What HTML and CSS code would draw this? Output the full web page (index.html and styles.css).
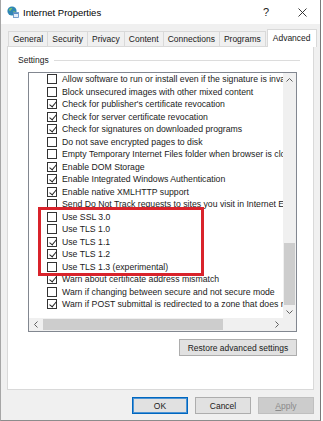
FILE: index.html
```html
<!doctype html>
<html lang="en">
<head>
    <meta charset="utf-8">
    <title>Internet Properties</title>
    <meta name="viewport" content="width=device-width, initial-scale=1.0">
    <link rel="stylesheet" href="styles.css">
</head>
<body>
    <div class="window">
        <div class="titlebar">
            <svg class="app-icon" viewBox="0 0 12 12">
                <circle cx="5" cy="5" r="4.6" fill="#2f86b5"/>
                <path d="M2 3.2 C3 2 4.5 1.6 5.4 2.4 C4.6 3.4 3.4 3.6 3.6 5 C2.6 5.2 2 4.4 2 3.2 Z" fill="#7cc36a"/>
                <path d="M6 5.6 C7 5 8.4 5.4 8.8 6.4 C8 7.6 6.8 8.2 6 7.6 Z" fill="#7cc36a"/>
                <rect x="6.5" y="6.5" width="5" height="5" fill="#e4eef8" stroke="#5a8cc4" stroke-width="0.8"/>
                <rect x="6.9" y="6.9" width="4.2" height="1.1" fill="#5a8cc4"/>
            </svg>
            <span class="title">Internet Properties</span>
            <span class="help">?</span>
            <svg class="close" viewBox="0 0 9 9">
                <path d="M0.5 0.5 L8.5 8.5 M8.5 0.5 L0.5 8.5" stroke="#222" stroke-width="0.9" fill="none"/>
            </svg>
        </div>
        <div class="client">
            <div class="tabs">
                <div class="tab">General</div>
                <div class="tab">Security</div>
                <div class="tab">Privacy</div>
                <div class="tab">Content</div>
                <div class="tab">Connections</div>
                <div class="tab">Programs</div>
                <div class="tab active">Advanced</div>
            </div>
            <div class="panel">
                <div class="group-head">
                    <span>Settings</span>
                    <div class="rule"></div>
                </div>
                <div class="listbox">
                    <div class="rows">
                        <div class="row"><span class="cb"></span>Allow software to run or install even if the signature is invalid</div>
                        <div class="row"><span class="cb"></span>Block unsecured images with other mixed content</div>
                        <div class="row"><span class="cb on"></span>Check for publisher's certificate revocation</div>
                        <div class="row"><span class="cb on"></span>Check for server certificate revocation</div>
                        <div class="row"><span class="cb on"></span>Check for signatures on downloaded programs</div>
                        <div class="row"><span class="cb"></span>Do not save encrypted pages to disk</div>
                        <div class="row"><span class="cb"></span>Empty Temporary Internet Files folder when browser is closed</div>
                        <div class="row"><span class="cb on"></span>Enable DOM Storage</div>
                        <div class="row"><span class="cb on"></span>Enable Integrated Windows Authentication</div>
                        <div class="row"><span class="cb on"></span>Enable native XMLHTTP support</div>
                        <div class="row"><span class="cb"></span>Send Do Not Track requests to sites you visit in Internet Explorer</div>
                        <div class="row"><span class="cb"></span>Use SSL 3.0</div>
                        <div class="row"><span class="cb"></span>Use TLS 1.0</div>
                        <div class="row"><span class="cb on"></span>Use TLS 1.1</div>
                        <div class="row"><span class="cb on"></span>Use TLS 1.2</div>
                        <div class="row"><span class="cb"></span>Use TLS 1.3 (experimental)</div>
                        <div class="row"><span class="cb on"></span>Warn about certificate address mismatch</div>
                        <div class="row"><span class="cb"></span>Warn if changing between secure and not secure mode</div>
                        <div class="row"><span class="cb on"></span>Warn if POST submittal is redirected to a zone that does not permit posting</div>
                    </div>
                    <div class="vscroll">
                        <div class="arrow">
                            <svg viewBox="0 0 7 4"><path d="M0.5 3.5 L3.5 0.5 L6.5 3.5" stroke="#606060" fill="none"/></svg>
                        </div>
                        <div class="vtrack"><div class="vthumb"></div></div>
                        <div class="arrow">
                            <svg viewBox="0 0 7 4"><path d="M0.5 0.5 L3.5 3.5 L6.5 0.5" stroke="#606060" fill="none"/></svg>
                        </div>
                    </div>
                    <div class="hscroll">
                        <div class="arrow">
                            <svg class="side" viewBox="0 0 4 7"><path d="M3.5 0.5 L0.5 3.5 L3.5 6.5" stroke="#606060" fill="none"/></svg>
                        </div>
                        <div class="htrack"><div class="hthumb"></div></div>
                        <div class="arrow">
                            <svg class="side" viewBox="0 0 4 7"><path d="M0.5 0.5 L3.5 3.5 L0.5 6.5" stroke="#606060" fill="none"/></svg>
                        </div>
                    </div>
                    <div class="corner"></div>
                    <div class="highlight"></div>
                </div>
                <div class="restore">
                    <button class="btn restore-btn">Restore advanced settings</button>
                </div>
            </div>
            <div class="actions">
                <button class="btn default">OK</button>
                <button class="btn">Cancel</button>
                <button class="btn" disabled><u>A</u>pply</button>
            </div>
        </div>
    </div>
</body>
</html>
```
FILE: styles.css
```css
* {
    box-sizing: border-box;
}
body {
    margin: 0;
    background: #fff;
    color: #1a1a1a;
    font-family: "Liberation Sans", Arial, sans-serif;
    font-size: 8.5px;
}
.window {
    width: 321px;
    height: 421px;
    border-left: 1px solid #a6a6a6;
    border-right: 1px solid #7a7a7a;
    border-bottom: 1px solid #8c8c8c;
    display: flex;
    flex-direction: column;
}
.titlebar {
    height: 24px;
    flex: none;
    background: #fff;
    display: flex;
    align-items: center;
    padding-left: 6px;
}
.app-icon {
    width: 12px;
    height: 12px;
    margin-right: 4px;
}
.title {
    flex: 1;
    font-size: 9.5px;
    color: #000;
}
.help {
    font-size: 11px;
    margin-right: 29px;
}
.close {
    width: 9px;
    height: 9px;
    margin-right: 13px;
}
.client {
    flex: 1;
    background: #f0f0f0;
    padding: 5px 6px 0 6px;
    display: flex;
    flex-direction: column;
}
.tabs {
    height: 17px;
    display: flex;
    align-items: flex-end;
    padding-left: 1px;
    position: relative;
    z-index: 1;
}
.tab {
    height: 15px;
    padding: 0 4px;
    border: 1px solid #d9d9d9;
    border-bottom: none;
    margin-left: -1px;
    display: flex;
    align-items: center;
    background: #f0f0f0;
}
.tab:first-child {
    margin-left: 0;
}
.tab.active {
    height: 18px;
    margin-bottom: -1px;
    margin-left: 1px;
    padding: 0 5px 2px;
    background: #fff;
}
.panel {
    height: 344px;
    flex: none;
    background: #fff;
    border: 1px solid #d9d9d9;
    display: flex;
    flex-direction: column;
}
.group-head {
    height: 10px;
    margin-top: 8px;
    padding-left: 10px;
    display: flex;
    align-items: center;
}
.rule {
    flex: 1;
    height: 1px;
    background: #dcdcdc;
    margin: 0 13px 0 5px;
}
.listbox {
    position: relative;
    width: 269px;
    height: 260px;
    margin: 7px 0 0 20px;
    border: 1px solid #828790;
    display: grid;
    grid-template-columns: 1fr 13px;
    grid-template-rows: 1fr 13px;
}
.rows {
    overflow: hidden;
    padding-left: 18px;
    font-size: 8.7px;
}
.row {
    height: 12.5px;
    display: flex;
    align-items: center;
    white-space: nowrap;
}
.cb {
    position: relative;
    flex: none;
    width: 10px;
    height: 10px;
    border: 1px solid #333;
    margin-right: 5px;
    background: #fff;
}
.cb.on::after {
    content: "";
    position: absolute;
    left: 2.5px;
    top: 0;
    width: 3px;
    height: 6px;
    border: solid #222;
    border-width: 0 1px 1px 0;
    transform: rotate(40deg);
}
.vscroll {
    background: #f0f0f0;
    display: flex;
    flex-direction: column;
}
.hscroll {
    background: #f0f0f0;
    display: flex;
}
.arrow {
    flex: none;
    width: 13px;
    height: 13px;
    display: flex;
    align-items: center;
    justify-content: center;
}
.arrow svg {
    width: 7px;
    height: 4px;
}
.arrow svg.side {
    width: 4px;
    height: 7px;
}
.vtrack {
    flex: 1;
    display: flex;
    flex-direction: column;
    justify-content: flex-end;
    padding: 0 1px;
}
.vthumb {
    height: 62px;
    background: #cdcdcd;
}
.htrack {
    flex: 1;
    padding: 1px 0 1px 1px;
}
.hthumb {
    width: 180px;
    height: 100%;
    background: #cdcdcd;
}
.corner {
    background: #f0f0f0;
}
.highlight {
    position: absolute;
    left: 9px;
    top: 134px;
    width: 166px;
    height: 69px;
    border: 3px solid #d9232b;
}
.restore {
    display: flex;
    justify-content: flex-end;
    margin: 7px 16px 0 0;
}
.btn {
    height: 17px;
    padding: 0;
    font: inherit;
    color: #1a1a1a;
    background: #e1e1e1;
    border: 1px solid #adadad;
}
.restore-btn {
    width: 118px;
}
.actions {
    display: flex;
    justify-content: flex-end;
    gap: 7px;
    margin-top: 7px;
}
.actions .btn {
    width: 56px;
}
.btn.default {
    border-color: #0067c0;
    box-shadow: inset 0 0 0 1px #4d94d4;
}
.btn:disabled {
    background: #cccccc;
    border-color: #bfbfbf;
    color: #8a8a8a;
}
```
